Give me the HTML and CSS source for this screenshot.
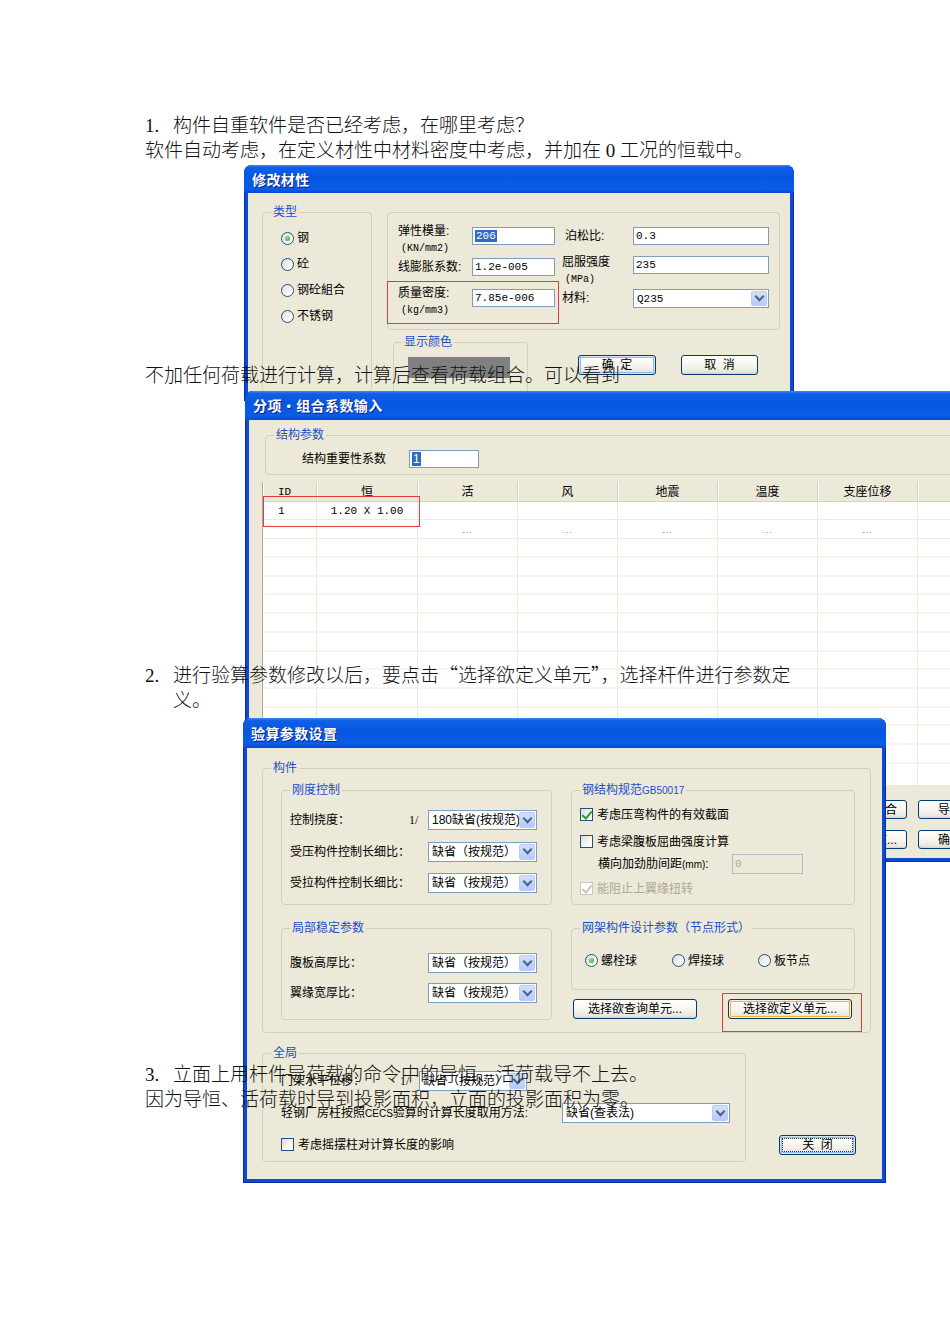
FILE: index.html
```html
<!DOCTYPE html>
<html lang="zh-CN">
<head>
<meta charset="utf-8">
<title>构件自重与验算参数</title>
<link rel="stylesheet" href="styles.css">
</head>
<body>
<div class="page">
  <div class="doc">
    <p class="para"><span class="num">1.</span>构件自重软件是否已经考虑，在哪里考虑？<br>软件自动考虑，在定义材性中材料密度中考虑，并加在 0 工况的恒载中。</p>
    <p class="para p2">不加任何荷载进行计算，计算后查看荷载组合。可以看到</p>
    <p class="para p3"><span class="num">2.</span>进行验算参数修改以后，要点击<span class="q">“</span>选择欲定义单元<span class="q">”</span>，选择杆件进行参数定<br>义。</p>
    <p class="para p4"><span class="num">3.</span>立面上用杆件导荷载的命令中的导恒、活荷载导不上去。<br>因为导恒、活荷载时导到投影面积，立面的投影面积为零。</p>
  </div>

  <!-- Dialog 1 -->
  <div class="win w1">
    <div class="titlebar t28">修改材性</div>
    <div class="winbody w1-body">
      <div class="grp w1-type">
        <span class="legend">类型</span>
        <div class="opt"><span class="radio on"></span>钢</div>
        <div class="opt"><span class="radio"></span>砼</div>
        <div class="opt"><span class="radio"></span>钢砼組合</div>
        <div class="opt"><span class="radio"></span>不锈钢</div>
      </div>
      <div class="w1-right">
        <div class="grp w1-props">
          <div class="lab2">弹性模量:<br><span class="unit">(KN/mm2)</span></div>
          <div class="input"><span class="sel">206</span></div>
          <div class="lab c3 c3b">泊松比:</div>
          <div class="input">0.3</div>
          <div class="lab">线膨胀系数:</div>
          <div class="input">1.2e-005</div>
          <div class="lab2 c3">屈服强度<br><span class="unit">(MPa)</span></div>
          <div class="input up2">235</div>
          <div class="lab2">质量密度:<br><span class="unit">(kg/mm3)</span></div>
          <div class="input">7.85e-006</div>
          <div class="lab c3">材料:</div>
          <div class="combo h19"><span class="val mono">Q235</span><span class="arrow"></span></div>
        </div>
        <div class="w1-bottom">
          <div class="grp w1-color"><span class="legend">显示颜色</span><div class="swatch"></div></div>
          <div class="btn focus w1-ok">确&nbsp;&nbsp;定</div>
          <div class="btn w1-cancel">取&nbsp;&nbsp;消</div>
        </div>
      </div>
    </div>
    <div class="redbox rb1"></div>
  </div>

  <!-- Dialog 2 -->
  <div class="win w2">
    <div class="titlebar t29">分项•组合系数输入</div>
    <div class="winbody w2-body">
      <div class="grp w2-struct">
        <span class="legend">结构参数</span>
        <span class="lab">结构重要性系数</span>
        <div class="input w2-imp"><span class="sel">1</span></div>
      </div>
      <div class="datagrid">
        <div class="hd idc">ID</div><div class="hd">恒</div><div class="hd">活</div><div class="hd">风</div><div class="hd">地震</div><div class="hd">温度</div><div class="hd">支座位移</div><div class="hd"></div>
        <div class="cell idc">1</div><div class="cell mono">1.20 X 1.00</div><div class="cell"></div><div class="cell"></div><div class="cell"></div><div class="cell"></div><div class="cell"></div><div class="cell"></div>
        <div class="cell"></div><div class="cell"></div><div class="cell dots">...</div><div class="cell dots">...</div><div class="cell dots">...</div><div class="cell dots">...</div><div class="cell dots">...</div><div class="cell"></div>
      </div>
      <div class="w2-btns">
        <div class="btn bright">组合</div><div class="btn bleft">导入</div>
        <div class="btn bright">参数...</div><div class="btn bleft">确定</div>
      </div>
    </div>
    <div class="redbox rb2"></div>
  </div>

  <!-- Dialog 3 -->
  <div class="win w3">
    <div class="titlebar t30">验算参数设置</div>
    <div class="winbody w3-body">
      <div class="grp w3-member">
        <span class="legend">构件</span>
        <div class="grp w3-stiff">
          <span class="legend">刚度控制</span>
          <div class="form3">
            <span class="lab">控制挠度：</span><span class="frac">1/</span>
            <div class="combo"><span class="val">180缺省(按规范)</span><span class="arrow"></span></div>
            <span class="lab">受压构件控制长细比：</span><span></span>
            <div class="combo"><span class="val">缺省（按规范）</span><span class="arrow"></span></div>
            <span class="lab">受拉构件控制长细比：</span><span></span>
            <div class="combo"><span class="val">缺省（按规范）</span><span class="arrow"></span></div>
          </div>
        </div>
        <div class="grp w3-code">
          <span class="legend">钢结构规范<span class="sm">GB50017</span></span>
          <div class="chk-row"><span class="check on"></span>考虑压弯构件的有效截面</div>
          <div class="chk-row r2"><span class="check"></span>考虑梁腹板屈曲强度计算</div>
          <div class="space-row"><span class="sp-lab">横向加劲肋间距<span class="sm">(mm)</span>:</span><div class="input dis">0</div></div>
          <div class="chk-row r4 disabled"><span class="check on dis"></span>能阻止上翼缘扭转</div>
        </div>
        <div class="grp w3-local">
          <span class="legend">局部稳定参数</span>
          <div class="form3 gap10">
            <span class="lab">腹板高厚比：</span><span></span>
            <div class="combo"><span class="val">缺省（按规范）</span><span class="arrow"></span></div>
            <span class="lab">翼缘宽厚比：</span><span></span>
            <div class="combo"><span class="val">缺省（按规范）</span><span class="arrow"></span></div>
          </div>
        </div>
        <div class="w3-rcol">
          <div class="grp w3-truss">
            <span class="legend">网架构件设计参数（节点形式）</span>
            <div class="ropt w87"><span class="radio on"></span>螺栓球</div>
            <div class="ropt w86"><span class="radio"></span>焊接球</div>
            <div class="ropt"><span class="radio"></span>板节点</div>
          </div>
          <div class="w3-selbtns">
            <div class="btn wsel">选择欲查询单元...</div>
            <div class="btn hot wsel">选择欲定义单元...</div>
          </div>
        </div>
      </div>
      <div class="w3-bottom">
        <div class="grp w3-global">
          <span class="legend">全局</span>
          <div class="form3 g1">
            <span class="lab">门架水平位移：</span><span class="frac">1/</span>
            <div class="combo"><span class="val">缺省（按规范）</span><span class="arrow"></span></div>
          </div>
          <div class="g2">
            <span class="lab g2lab">轻钢厂房柱按照<span class="sm">CECS</span>验算时计算长度取用方法:</span>
            <div class="combo g2combo"><span class="val">缺省(查表法)</span><span class="arrow"></span></div>
          </div>
          <div class="chk-row g3"><span class="check"></span>考虑摇摆柱对计算长度的影响</div>
        </div>
        <div class="btn focus dotted w3-close">关&nbsp;&nbsp;闭</div>
      </div>
    </div>
    <div class="redbox rb3"></div>
  </div>
</div>
</body>
</html>
```

FILE: styles.css
```css
* { box-sizing: border-box; }
html, body { margin: 0; padding: 0; background: #fff; }

.page {
  position: relative;
  width: 950px;
  height: 1344px;
  overflow: hidden;
  background: #fff;
}

/* ---------- document text ---------- */
.doc {
  position: relative;
  z-index: 10;
  padding: 113px 0 0 145px;
  font-family: "Liberation Serif", "Noto Sans CJK SC", serif;
  font-size: 19px;
  font-weight: 300;
  line-height: 25px;
  color: #111;
}
.para { margin: 0; white-space: nowrap; }
.p2 { margin-top: 200px; }
.p3 { margin-top: 273px; padding-left: 28px; text-indent: -28px; }
.p4 { margin-top: 349px; }
.num { display: inline-block; width: 28px; text-indent: 0; }
.q { font-family: "Noto Sans CJK SC", sans-serif; font-feature-settings: "fwid" 1; }

/* ---------- XP windows ---------- */
.win {
  position: absolute;
  padding: 0 4px 4px;
  background: #0B4BD6;
  border-radius: 8px 8px 0 0;
  overflow: hidden;
  box-shadow: inset 0 0 0 1px #0A2A9E;
  font-family: "Liberation Sans", "Noto Sans CJK SC", sans-serif;
  font-size: 12px;
  line-height: 14px;
  color: #000;
}
.titlebar {
  margin: 0 -4px;
  padding-left: 8px;
  color: #fff;
  font-weight: bold;
  font-size: 14px;
  letter-spacing: 0.4px;
  background: linear-gradient(to bottom, #3D8AF7 0%, #0E5FE6 9%, #0756DF 45%, #0A5DE8 85%, #0649D3 100%);
  text-shadow: 1px 1px 0 #0A2180;
  font-family: "Noto Sans CJK SC", sans-serif;
}
.t28 { height: 28px; line-height: 28px; }
.t29 { height: 29px; line-height: 29px; }
.t30 { height: 30px; line-height: 30px; }
.winbody { background: #ECE9D8; overflow: hidden; }

.w1 { left: 244px; top: 165px; width: 550px; height: 236px; z-index: 1; }
.w2 { left: 245px; top: 391px; width: 780px; height: 471px; z-index: 2; }
.w3 { left: 243px; top: 718px; width: 643px; height: 465px; z-index: 3; }

.w1-body { height: 208px; }
.w2-body { height: 438px; }
.w3-body { height: 431px; }

/* group boxes */
.grp {
  position: relative;
  border: 1px solid #D0D0BF;
  border-radius: 4px;
}
.legend {
  position: absolute;
  top: -8px;
  left: 8px;
  padding: 0 2px;
  background: #ECE9D8;
  color: #1A4FCC;
  white-space: nowrap;
  line-height: 14px;
}
.sm { font-family: "Liberation Sans Narrow", "Liberation Sans", sans-serif; font-size: 10px; }

/* form controls */
.lab { line-height: 18px; white-space: nowrap; }
.lab2 { margin-top: -4px; line-height: 16px; white-space: nowrap; }
.unit { font-family: "Liberation Mono", monospace; font-size: 10px; padding-left: 3px; }
.mono { font-family: "Liberation Mono", monospace; font-size: 11px; }

.input {
  height: 18px;
  border: 1px solid #7F9DB9;
  background: #fff;
  padding-left: 2px;
  line-height: 16px;
  font-family: "Liberation Mono", monospace;
  font-size: 11px;
  white-space: nowrap;
  overflow: hidden;
}
.input.dis { background: #ECE9D8; border-color: #B5B8C0; color: #ACA899; height: 20px; line-height: 18px; }
.sel { background: #316AC5; color: #fff; padding: 0 1px; }

.combo {
  display: flex;
  align-items: stretch;
  height: 20px;
  border: 1px solid #7F9DB9;
  background: #fff;
  padding: 1px;
}
.combo.h19 { height: 19px; }
.combo .val {
  flex: 1;
  overflow: hidden;
  white-space: nowrap;
  padding-left: 2px;
  line-height: 16px;
}
.combo .arrow {
  flex: none;
  width: 16px;
  border-radius: 2px;
  background: linear-gradient(to bottom, #D3E0FD, #B6CAF8);
  border: 1px solid #B8CCF5;
  display: flex;
  align-items: center;
  justify-content: center;
}
.combo .arrow::before {
  content: "";
  width: 5px;
  height: 5px;
  border-right: 2px solid #4D6185;
  border-bottom: 2px solid #4D6185;
  transform: translateY(-2px) rotate(45deg);
}

.radio {
  flex: none;
  display: inline-block;
  position: relative;
  width: 13px;
  height: 13px;
  border-radius: 50%;
  border: 1px solid #1C5180;
  background: linear-gradient(135deg, #DCDBD5, #FFFFFF 80%);
  margin-right: 3px;
}
.radio.on::after {
  content: "";
  position: absolute;
  left: 3px;
  top: 3px;
  width: 5px;
  height: 5px;
  border-radius: 50%;
  background: radial-gradient(circle at 40% 35%, #8BE889, #21A121);
}

.check {
  flex: none;
  display: inline-block;
  position: relative;
  width: 13px;
  height: 13px;
  border: 1px solid #1C5180;
  background: linear-gradient(135deg, #DCDBD5, #FFFFFF 80%);
  margin-right: 4px;
}
.check.on::after {
  content: "";
  position: absolute;
  left: 3px;
  top: 0px;
  width: 4px;
  height: 8px;
  border-right: 2px solid #21A121;
  border-bottom: 2px solid #21A121;
  transform: rotate(40deg);
}
.check.dis { border-color: #CAC8BB; background: #fff; }
.check.dis::after { border-color: #CAC8BB; }

.btn {
  height: 20px;
  border: 1px solid #003C74;
  border-radius: 3px;
  background: linear-gradient(to bottom, #FFFFFF 0%, #F5F4EF 55%, #EAE8DF 85%, #D8D3C7 100%);
  text-align: center;
  line-height: 18px;
  white-space: nowrap;
  overflow: hidden;
}
.btn.focus { box-shadow: inset 0 0 0 1px #CEE7FF, inset 0 0 0 2px #98B8EA; }
.btn.hot { box-shadow: inset 0 0 0 1px #FFF0CF, inset 0 0 0 2px #F8B330; }
.btn.dotted { outline: 1px dotted #333; outline-offset: -4px; }

.redbox {
  position: absolute;
  border: 1px solid #E23B3B;
  z-index: 4;
}

/* ---------- dialog 1 ---------- */
.w1-body {
  display: flex;
  gap: 15px;
  padding: 19px 10px 0 14px;
}
.w1-type {
  flex: none;
  width: 110px;
  height: 180px;
  padding: 12px 0 0 18px;
}
.opt {
  display: flex;
  align-items: center;
  height: 26px;
}
.w1-right { width: 393px; flex: none; }
.w1-props {
  height: 118px;
  padding: 14px 0 0 10px;
  display: grid;
  grid-template-columns: 74px 83px 78px 136px;
  grid-template-rows: 31px 31px 31px;
  align-items: start;
}
.c3 { padding-left: 7px; }
.c3b { padding-left: 10px; }
.up2 { margin-top: -2px; }
.w1-bottom {
  display: flex;
  align-items: flex-start;
  margin-top: 12px;
}
.w1-color {
  flex: none;
  margin-left: 6px;
  width: 135px;
  height: 60px;
  padding: 14px 0 0 14px;
}
.swatch { width: 102px; height: 21px; background: #808080; }
.w1-ok { width: 78px; margin: 13px 0 0 50px; }
.w1-cancel { width: 77px; margin: 13px 0 0 25px; }
.rb1 { left: 143px; top: 116px; width: 172px; height: 43px; }

/* ---------- dialog 2 ---------- */
.w2-body { padding: 15px 0 0 13px; }
.w2-struct {
  margin-left: 3px;
  width: 720px;
  height: 40px;
  display: flex;
  align-items: flex-start;
  padding: 14px 0 0 36px;
}
.w2-imp { width: 70px; margin-left: 23px; font-family: "Liberation Sans", sans-serif; font-size: 12px; }
.datagrid {
  margin-top: 7px;
  width: 800px;
  height: 303px;
  display: grid;
  grid-template-columns: 54px 101px 100px 100px 100px 100px 100px 100px;
  grid-template-rows: 19.5px 18.7px 18.7px;
  align-content: start;
  border-left: 1px solid #A9A89C;
  background-color: #fff;
  background-image:
    linear-gradient(to right, transparent 53px, #EEEADC 53px, #EEEADC 54px, transparent 54px),
    repeating-linear-gradient(to right, transparent 0, transparent 99px, #EEEADC 99px, #EEEADC 100px),
    repeating-linear-gradient(to bottom, transparent 0, transparent 17.7px, #EEEADC 17.7px, #EEEADC 18.7px);
  background-repeat: no-repeat, repeat, repeat;
  background-position: 0 0, 55px 0, 0 19.5px;
}
.hd {
  background: #ECE9D8;
  border-right: 1px solid #D6D2C2;
  border-bottom: 1px solid #D6D2C2;
  box-shadow: inset 1px 0 0 #fff;
  text-align: center;
  line-height: 20px;
  white-space: nowrap;
}
.cell {
  border-right: 1px solid #EEEADC;
  border-bottom: 1px solid #EEEADC;
  background: #fff;
  text-align: center;
  line-height: 18px;
  white-space: nowrap;
}
.idc { text-align: left; padding-left: 15px; font-family: "Liberation Mono", monospace; font-size: 11px; }
.hd.idc { font-size: 11px; }
.dots { color: #888; font-size: 9px; line-height: 20px; letter-spacing: 1px; }
.w2-btns {
  margin: 15px 0 0 558px;
  display: grid;
  grid-template-columns: 87px 82px;
  column-gap: 11px;
  row-gap: 11px;
}
.w2-btns .btn { height: 19px; }
.bright { text-align: right; padding-right: 9px; }
.bleft { text-align: left; padding-left: 19px; }
.rb2 { left: 18px; top: 105px; width: 157px; height: 31px; }

/* ---------- dialog 3 ---------- */
.w3-body { padding: 20px 15px 0 15px; }
.w3-member {
  width: 609px;
  height: 265px;
  padding: 21px 0 0 18px;
  display: grid;
  grid-template-columns: 271px 284px;
  grid-template-rows: 115px 92px;
  column-gap: 19px;
  row-gap: 23px;
}
.w3-stiff { padding: 19px 0 0 8px; }
.form3 {
  display: grid;
  grid-template-columns: 119px 19px 109px;
  grid-auto-rows: 20px;
  row-gap: 11.5px;
  align-items: center;
}
.form3.gap10 { row-gap: 10px; }
.frac { font-family: "Liberation Serif", serif; font-size: 12px; }
.w3-code { padding: 17px 0 0 8px; }
.chk-row { display: flex; align-items: center; height: 13px; white-space: nowrap; }
.chk-row.r2 { margin-top: 14px; }
.chk-row.r4 { margin-top: 8px; }
.chk-row.disabled { color: #ACA899; }
.space-row {
  margin-top: 6px;
  display: grid;
  grid-template-columns: 152px 71px;
  align-items: center;
}
.sp-lab { padding-left: 18px; white-space: nowrap; }
.w3-local { padding: 24px 0 0 8px; }
.w3-rcol { display: flex; flex-direction: column; }
.w3-truss {
  height: 62px;
  padding: 25px 0 0 13px;
  display: flex;
  align-items: flex-start;
}
.ropt { display: flex; align-items: center; height: 13px; white-space: nowrap; }
.w87 { width: 87px; }
.w86 { width: 86px; }
.w3-selbtns { display: flex; gap: 31px; margin: 9px 0 0 2px; }
.wsel { width: 124px; }
.w3-bottom { display: flex; align-items: flex-end; margin-top: 20px; }
.w3-global {
  flex: none;
  width: 484px;
  height: 109px;
  padding: 17px 0 0 18px;
}
.g1 { grid-template-columns: 119px 19px 108px; }
.g2 { display: flex; align-items: center; margin-top: 12px; }
.g2lab { width: 281px; flex: none; }
.g2combo { width: 168px; }
.g3 { margin-top: 15px; }
.w3-close { width: 77px; margin: 0 0 7px 33px; }
.rb3 { left: 479px; top: 275px; width: 140px; height: 39px; }
```
